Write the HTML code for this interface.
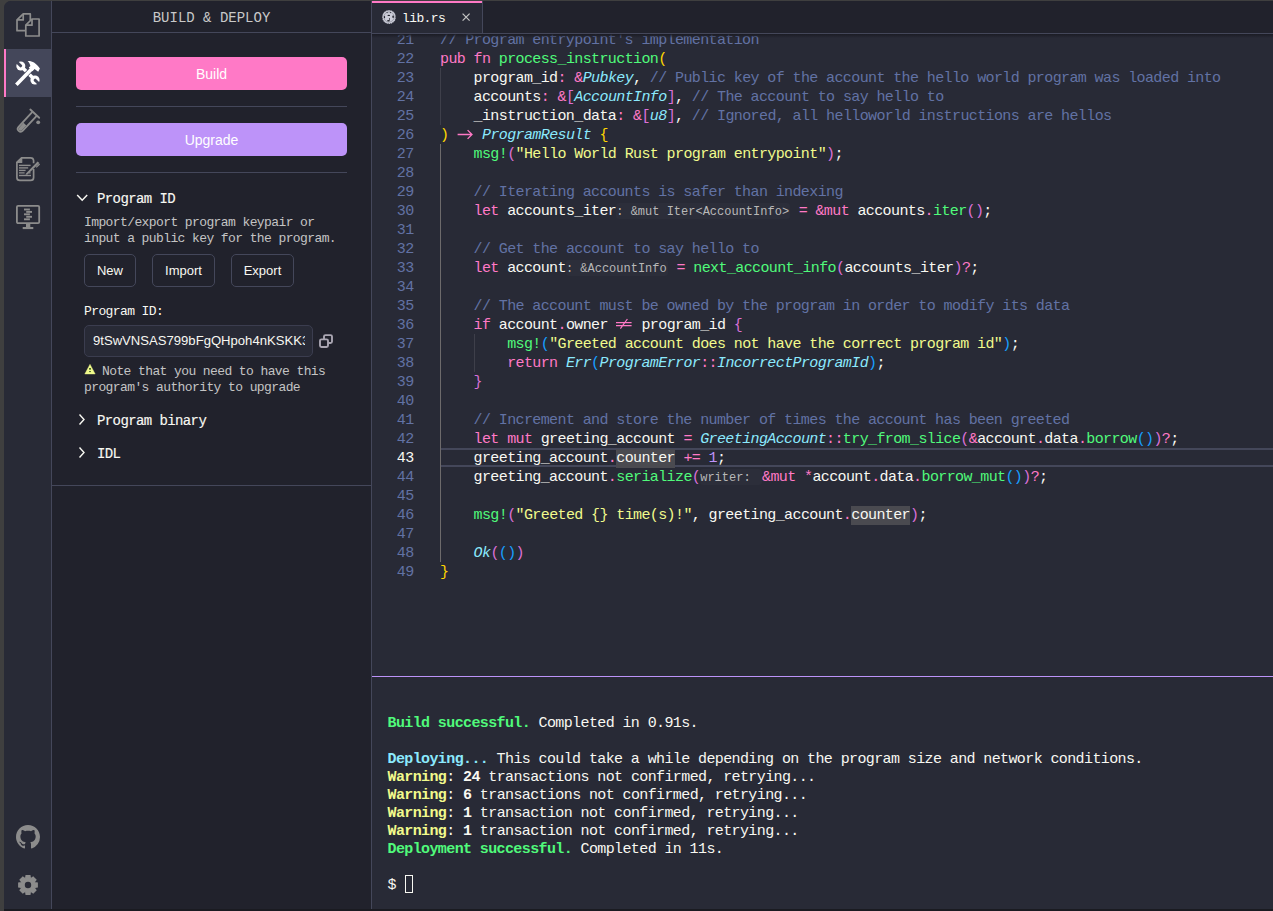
<!DOCTYPE html>
<html><head><meta charset="utf-8">
<style>
html,body{margin:0;padding:0;width:1273px;height:911px;overflow:hidden;background:#3f3f3f;}
*{box-sizing:border-box;}
.a{position:absolute;}
body{font-family:"Liberation Mono",monospace;color:#f8f8f2;}
.sans{font-family:"Liberation Sans",sans-serif;}
#frame{position:absolute;left:4px;top:1px;width:1269px;height:908px;overflow:hidden;border-top-left-radius:7px;background:#282a36;}
#bot{position:absolute;left:4px;top:909px;width:1269px;height:2px;background:#1a1b21;}
/* activity bar */
#act{left:4px;top:1px;width:47px;height:908px;background:#282a36;border-top-left-radius:7px;}
.vl{width:1px;background:#44475a;}
.hl{height:1px;background:#44475a;}
#side{left:52px;top:1px;width:319px;height:908px;background:#21222c;}
.icon{position:absolute;left:16px;width:24px;height:24px;}
/* sidebar */
.hdr{left:52px;top:3px;width:319px;height:31px;text-align:center;line-height:31px;font-size:14px;color:#c9c9c9;letter-spacing:0;}
.btn{left:76px;width:271px;height:33px;border-radius:5px;color:#fff;font-size:14px;text-align:center;line-height:35px;}
.sbtn{height:33px;border:1px solid #44475a;border-radius:5px;color:#f8f8f2;font-size:13px;text-align:center;line-height:32px;background:#21222c;}
.sec{font-size:14px;letter-spacing:-0.6px;color:#f8f8f2;line-height:16px;-webkit-text-stroke:0.15px #f8f8f2;}
.desc{font-size:13px;letter-spacing:-0.6px;color:#c4c4c4;line-height:16px;white-space:pre;}
/* editor */
#tabbar{left:372px;top:1px;width:901px;height:32px;background:#21222c;}
.ln{position:absolute;margin-top:1px;left:372px;width:41.6px;text-align:right;font-size:15px;letter-spacing:-0.6px;line-height:19px;height:19px;color:#6272a4;white-space:pre;}
.cl{position:absolute;margin-top:1px;left:440px;font-size:15px;letter-spacing:-0.61px;line-height:19px;height:19px;color:#f8f8f2;white-space:pre;}
.k{color:#ff79c6;}
.f{color:#50fa7b;}
.t{color:#8be9fd;font-style:italic;}
.c{color:#6272a4;}
.s{color:#f1fa8c;}
.n{color:#bd93f9;}
.b1{color:#ffd700;}
.b2{color:#da70d6;}
.b3{color:#179fff;}
.ih{font-size:12px;letter-spacing:0;color:#b8b8b8;background:#2c2e3a;border-radius:3px;}
.hi{background:#4a4a50;display:inline-block;vertical-align:top;height:19px;}
.hi2{margin-top:2px;height:15px;line-height:15px;}
.ih{display:inline-block;vertical-align:top;height:16px;line-height:19px;overflow:hidden;margin-top:1px;}
/* terminal */
.tl{position:absolute;margin-top:2px;left:387.5px;font-size:15px;letter-spacing:-0.61px;line-height:18px;height:18px;color:#f8f8f2;white-space:pre;}
.g{color:#50fa7b;font-weight:bold;}
.y{color:#f1fa8c;font-weight:bold;}
.bl{color:#8be9fd;font-weight:bold;}
.w{font-weight:bold;}
</style></head><body>
<div id="frame"></div>
<div id="bot"></div>
<div class="a" id="act"></div>
<div class="a vl" style="left:51px;top:1px;height:908px;"></div>
<div class="a" id="side"></div>
<div class="a vl" style="left:371px;top:1px;height:908px;"></div>

<!-- activity bar active -->
<div class="a" style="left:4px;top:49px;width:47px;height:48px;background:#44475a;"></div>
<div class="a" style="left:4px;top:49px;width:2px;height:48px;background:#ff79c6;"></div>

<!-- files icon -->
<svg class="a" style="left:12px;top:8px" width="32" height="32" viewBox="0 0 32 32">
<g fill="none" stroke="#8c8c8c" stroke-width="1.7" stroke-linejoin="round">
<path d="M18.3 12.4 V5.9 H11.2 L5 11.9 V22.7 H13.2"/>
<path d="M11.2 5.9 V11.9 H5"/>
<path d="M20 11 H27.1 V28 H13.8 V17.2 Z"/>
<path d="M20 11 V17.2 H13.8"/>
</g>
</svg>
<!-- tools icon (active) -->
<svg class="a" style="left:12px;top:57px" width="32" height="32" viewBox="0 0 32 32">
<defs><mask id="wm"><rect x="0" y="0" width="32" height="32" fill="#fff"/>
<path d="M8.6 8.8 L3 3.2" stroke="#000" stroke-width="3" stroke-linecap="round"/>
<path d="M23.2 23.2 L28.8 28.8" stroke="#000" stroke-width="3" stroke-linecap="round"/>
</mask></defs>
<g fill="#fff" mask="url(#wm)">
<circle cx="8.8" cy="9" r="4.5"/>
<circle cx="23" cy="23" r="4.6"/>
<path d="M8.8 9 L23 23" stroke="#fff" stroke-width="3.4"/>
</g>
<path d="M5.6 26.4 L18.8 12.8" stroke="#44475a" stroke-width="5"/>
<path d="M5.6 26.4 L19.8 11.8" stroke="#fff" stroke-width="3.6" stroke-linecap="square"/>
<path d="M15.6 4 C19.6 3.6 24.4 6 27.9 11.6 L26.2 14.8 L22.6 11.9 L20.4 14.2 L16.8 10.6 L18.4 9 C18 7.2 17 5.3 15.6 4 Z" fill="#fff"/>
</svg>
<!-- test tube -->
<svg class="a" style="left:12px;top:105px" width="32" height="32" viewBox="0 0 32 32">
<g transform="translate(14.8 17.2) rotate(43) scale(1.08)">
<path d="M-2.7 -10.5 V8.3 A2.7 2.7 0 0 0 2.7 8.3 V-10.5" fill="none" stroke="#8c8c8c" stroke-width="1.7"/>
<path d="M-5.6 -10.8 H5.6" fill="none" stroke="#8c8c8c" stroke-width="1.7" stroke-linecap="round"/>
<path d="M-1.8 2.5 H1.8 V8.3 A1.8 1.8 0 0 1 -1.8 8.3 Z" fill="#8c8c8c"/>
</g>
<circle cx="26.2" cy="17.3" r="1.9" fill="#8c8c8c"/>
</svg>
<!-- document with pen -->
<svg class="a" style="left:12px;top:153px" width="32" height="32" viewBox="0 0 32 32">
<g fill="none" stroke="#8c8c8c" stroke-width="1.7">
<path d="M21.6 10.2 V7.5 A3 3 0 0 0 18.6 4.8 H9.7 L4.9 9.4 V24.4 A3 3 0 0 0 7.9 27.4 H18.6 A3 3 0 0 0 21.6 24.4 V16"/>
</g>
<path d="M4.9 9.4 L9.7 4.8 V9.4 Z" fill="#8c8c8c" stroke="#8c8c8c" stroke-width="1.2" stroke-linejoin="round"/>
<g stroke="#8c8c8c" stroke-width="1.4">
<path d="M7 12.4 H18.6"/><path d="M7 14.9 H16.2"/><path d="M7 17.4 H13.6"/><path d="M7 19.9 H12.6 M16.9 19.9 H18.6"/><path d="M7 22.5 H19"/>
</g>
<path d="M14 20.4 L25.6 8.4 L27.4 10 L15.6 21.6 L13.6 21.8 Z" fill="#8c8c8c"/>
<path d="M24.2 14.4 L27.6 11" stroke="#8c8c8c" stroke-width="1.3"/>
</svg>
<!-- monitor -->
<svg class="a" style="left:12px;top:201px" width="32" height="32" viewBox="0 0 32 32">
<rect x="4.9" y="4.8" width="22.3" height="17.3" rx="1.2" fill="none" stroke="#8c8c8c" stroke-width="1.8"/>
<rect x="14" y="22.5" width="4.3" height="3.8" fill="#8c8c8c"/>
<rect x="10.7" y="26" width="10.6" height="2.1" fill="#8c8c8c"/>
<g stroke="#8c8c8c" stroke-width="1.9">
<path d="M12 8.5 H17.9"/><path d="M14.2 10.9 H20"/><path d="M12 13.3 H17.9"/><path d="M14.2 15.8 H20"/><path d="M12 18.3 H17.9"/>
</g>
</svg>
<!-- github -->
<svg class="a" style="left:16px;top:825px" width="24" height="24" viewBox="0 0 16 16">
<path fill="#8c8c8c" d="M8 0C3.58 0 0 3.58 0 8c0 3.54 2.29 6.53 5.47 7.59.4.07.55-.17.55-.38 0-.19-.01-.82-.01-1.49-2.01.37-2.53-.49-2.69-.94-.09-.23-.48-.94-.82-1.130-.28-.15-.68-.52-.01-.53.63-.01 1.08.58 1.23.82.72 1.21 1.870.87 2.33.66.07-.52.28-.87.51-1.07-1.78-.2-3.64-.89-3.64-3.95 0-.87.31-1.59.82-2.15-.08-.2-.36-1.02.08-2.12 0 0 .67-.21 2.2.82.64-.18 1.32-.27 2-.27.68 0 1.36.09 2 .27 1.53-1.04 2.2-.82 2.2-.82.44 1.1.16 1.92.08 2.12.51.56.82 1.27.82 2.15 0 3.07-1.87 3.75-3.65 3.95.29.25.54.73.54 1.48 0 1.07-.01 1.93-.01 2.2 0 .21.15.46.55.38A8.013 8.013 0 0016 8c0-4.420-3.58-8-8-8z"/>
</svg>
<!-- gear -->
<svg class="a" style="left:0;top:0" width="52" height="911" viewBox="0 0 52 911">
<path fill="#8c8c8c" fill-rule="evenodd" d="M24.99 878.24 L25.52 875.10 L30.48 875.10 L31.01 878.24 L30.65 878.09 L33.25 876.25 L36.75 879.75 L34.91 882.35 L34.76 881.99 L37.90 882.52 L37.90 887.48 L34.76 888.01 L34.91 887.65 L36.75 890.25 L33.25 893.75 L30.65 891.91 L31.01 891.76 L30.48 894.90 L25.52 894.90 L24.99 891.76 L25.35 891.91 L22.75 893.75 L19.25 890.25 L21.09 887.65 L21.24 888.01 L18.10 887.48 L18.10 882.52 L21.24 881.99 L21.09 882.35 L19.25 879.75 L22.75 876.25 L25.35 878.09Z M28 881.8 A3.2 3.2 0 1 0 28 888.2 A3.2 3.2 0 1 0 28 881.8Z"/>
</svg>

<!-- sidebar header -->
<div class="a hdr">BUILD &amp; DEPLOY</div>
<div class="a hl" style="left:52px;top:32px;width:319px;"></div>

<div class="a btn sans" style="top:57px;background:#ff79c6;">Build</div>
<div class="a hl" style="left:76px;top:106px;width:271px;"></div>
<div class="a btn sans" style="top:123px;background:#bd93f9;">Upgrade</div>
<div class="a hl" style="left:76px;top:172px;width:271px;"></div>

<!-- Program ID section -->
<svg class="a" style="left:76px;top:193px" width="12" height="10" viewBox="0 0 12 10"><path d="M1.2 2 L6.2 7.2 L11.2 2" fill="none" stroke="#f8f8f2" stroke-width="1.5"/></svg>
<div class="a sec" style="left:97px;top:191px;">Program ID</div>
<div class="a desc" style="left:84px;top:215px;">Import/export program keypair or
input a public key for the program.</div>
<div class="a sbtn sans" style="left:84px;top:254px;width:52px;">New</div>
<div class="a sbtn sans" style="left:152px;top:254px;width:63px;">Import</div>
<div class="a sbtn sans" style="left:231px;top:254px;width:63px;">Export</div>
<div class="a desc" style="left:84px;top:304px;color:#f8f8f2">Program ID:</div>
<div class="a" style="left:84px;top:325px;width:229px;height:32px;border:1px solid #3b3d4f;border-radius:5px;background:#282a36;overflow:hidden;">
<div class="a sans" style="left:8px;top:0;width:212px;overflow:hidden;white-space:nowrap;font-size:13.1px;line-height:30px;color:#f8f8f2;">9tSwVNSAS799bFgQHpoh4nKSKK3Yk9bTvQ5yGfJkZrFa</div>
</div>
<!-- copy icon -->
<svg class="a" style="left:318px;top:333px" width="16" height="16" viewBox="0 0 16 16"><rect x="2" y="6.4" width="8" height="7.6" rx="1.4" fill="none" stroke="#aaa6b2" stroke-width="1.9"/><path d="M6 6.4 V3.6 Q6 2.1 7.5 2.1 H12.5 Q14 2.1 14 3.6 V8.5 Q14 10 12.5 10 H10" fill="none" stroke="#aaa6b2" stroke-width="1.9"/></svg>
<!-- warning -->
<svg class="a" style="left:84px;top:364px" width="12" height="11" viewBox="0 0 12 11"><path d="M6 0.3 L11.2 10 H0.8 Z" fill="#f1fa8c" stroke="#f1fa8c" stroke-width="0.4" stroke-linejoin="round"/><rect x="5" y="4" width="2" height="1.7" fill="#4a6a2a"/><rect x="5" y="7.1" width="2" height="1" fill="#4a6a2a"/></svg>
<div class="a desc" style="left:102px;top:364px;">Note that you need to have this</div>
<div class="a desc" style="left:84px;top:380px;">program's authority to upgrade</div>
<svg class="a" style="left:76px;top:413px" width="12" height="13" viewBox="0 0 12 13"><path d="M3.5 1.5 L8 6.5 L3.5 11.5" fill="none" stroke="#f8f8f2" stroke-width="1.4"/></svg>
<div class="a sec" style="left:97px;top:413px;">Program binary</div>
<svg class="a" style="left:76px;top:446px" width="12" height="13" viewBox="0 0 12 13"><path d="M3.5 1.5 L8 6.5 L3.5 11.5" fill="none" stroke="#f8f8f2" stroke-width="1.4"/></svg>
<div class="a sec" style="left:97px;top:446px;">IDL</div>
<div class="a hl" style="left:52px;top:485px;width:319px;"></div>

<!-- line numbers -->
<div class="ln" style="top:30px">21</div>
<div class="ln" style="top:49px">22</div>
<div class="ln" style="top:68px">23</div>
<div class="ln" style="top:87px">24</div>
<div class="ln" style="top:106px">25</div>
<div class="ln" style="top:125px">26</div>
<div class="ln" style="top:144px">27</div>
<div class="ln" style="top:163px">28</div>
<div class="ln" style="top:182px">29</div>
<div class="ln" style="top:201px">30</div>
<div class="ln" style="top:220px">31</div>
<div class="ln" style="top:239px">32</div>
<div class="ln" style="top:258px">33</div>
<div class="ln" style="top:277px">34</div>
<div class="ln" style="top:296px">35</div>
<div class="ln" style="top:315px">36</div>
<div class="ln" style="top:334px">37</div>
<div class="ln" style="top:353px">38</div>
<div class="ln" style="top:372px">39</div>
<div class="ln" style="top:391px">40</div>
<div class="ln" style="top:410px">41</div>
<div class="ln" style="top:429px">42</div>
<div class="ln" style="top:448px;color:#f8f8f2">43</div>
<div class="ln" style="top:467px">44</div>
<div class="ln" style="top:486px">45</div>
<div class="ln" style="top:505px">46</div>
<div class="ln" style="top:524px">47</div>
<div class="ln" style="top:543px">48</div>
<div class="ln" style="top:562px">49</div>
<!-- indent guides -->
<div class="a" style="left:440px;top:68px;width:1px;height:57px;background:#3e3f4a"></div>
<div class="a" style="left:440px;top:144px;width:1px;height:418px;background:#6d6a6b"></div>
<div class="a" style="left:474px;top:334px;width:1px;height:38px;background:#3e3f4a"></div>
<!-- current line -->
<div class="a" style="left:441px;top:448px;width:832px;height:19px;border-top:2px solid #44475a;border-bottom:2px solid #44475a;"></div>
<!-- code -->
<div class="cl" style="top:30px"><span class="c">// Program entrypoint's implementation</span></div>
<div class="cl" style="top:49px"><span class="k">pub fn</span> <span class="f">process_instruction</span><span class="b1">(</span></div>
<div class="cl" style="top:68px">    program_id<span class="k">:</span> <span class="k">&amp;</span><span class="t">Pubkey</span>, <span class="c">// Public key of the account the hello world program was loaded into</span></div>
<div class="cl" style="top:87px">    accounts<span class="k">:</span> <span class="k">&amp;</span><span class="b2">[</span><span class="t">AccountInfo</span><span class="b2">]</span>, <span class="c">// The account to say hello to</span></div>
<div class="cl" style="top:106px">    _instruction_data<span class="k">:</span> <span class="k">&amp;</span><span class="b2">[</span><span class="t">u8</span><span class="b2">]</span>, <span class="c">// Ignored, all helloworld instructions are hellos</span></div>
<div class="cl" style="top:125px"><span class="b1">)</span> <svg width="16.8" height="19" viewBox="0 0 16.8 19" style="vertical-align:top"><path d="M0.6 8.5 H15 M10.6 4.1 L15 8.5 L10.6 12.9" fill="none" stroke="#ff79c6" stroke-width="1.3"/></svg> <span class="t">ProgramResult</span> <span class="b1">{</span></div>
<div class="cl" style="top:144px">    <span class="f">msg!</span><span class="b2">(</span><span class="s">"Hello World Rust program entrypoint"</span><span class="b2">)</span>;</div>
<div class="cl" style="top:182px">    <span class="c">// Iterating accounts is safer than indexing</span></div>
<div class="cl" style="top:201px">    <span class="k">let</span> accounts_iter<span class="ih" style="width:174px">: &amp;mut Iter&lt;AccountInfo&gt;</span> <span class="k">=</span> <span class="k">&amp;mut</span> accounts<span class="k">.</span><span class="f">iter</span><span class="b2">()</span>;</div>
<div class="cl" style="top:239px">    <span class="c">// Get the account to say hello to</span></div>
<div class="cl" style="top:258px">    <span class="k">let</span> account<span class="ih" style="width:102.2px">: &amp;AccountInfo</span> <span class="k">=</span> <span class="f">next_account_info</span><span class="b2">(</span>accounts_iter<span class="b2">)</span><span class="k">?</span>;</div>
<div class="cl" style="top:296px">    <span class="c">// The account must be owned by the program in order to modify its data</span></div>
<div class="cl" style="top:315px">    <span class="k">if</span> account<span class="k">.</span>owner <svg width="16.8" height="19" viewBox="0 0 16.8 19" style="vertical-align:top"><path d="M0 6.6 H15.6 M0 9.7 H15.6 M11.4 3 L4.4 12.6" fill="none" stroke="#ff79c6" stroke-width="1.2"/></svg> program_id <span class="b2">{</span></div>
<div class="cl" style="top:334px">        <span class="f">msg!</span><span class="b3">(</span><span class="s">"Greeted account does not have the correct program id"</span><span class="b3">)</span>;</div>
<div class="cl" style="top:353px">        <span class="k">return</span> <span class="t">Err</span><span class="b3">(</span><span class="t">ProgramError</span><span class="k">::</span><span class="t">IncorrectProgramId</span><span class="b3">)</span>;</div>
<div class="cl" style="top:372px">    <span class="b2">}</span></div>
<div class="cl" style="top:410px">    <span class="c">// Increment and store the number of times the account has been greeted</span></div>
<div class="cl" style="top:429px">    <span class="k">let mut</span> greeting_account <span class="k">=</span> <span class="t">GreetingAccount</span><span class="k">::</span><span class="f">try_from_slice</span><span class="b2">(</span><span class="k">&amp;</span>account<span class="k">.</span>data<span class="k">.</span><span class="f">borrow</span><span class="b3">()</span><span class="b2">)</span><span class="k">?</span>;</div>
<div class="cl" style="top:448px">    greeting_account<span class="k">.</span><span class="hi">counter</span> <span class="k">+=</span> <span class="n">1</span>;</div>
<div class="cl" style="top:467px">    greeting_account<span class="k">.</span><span class="f">serialize</span><span class="b2">(</span><span class="ih" style="width:61.8px">writer: </span><span class="k">&amp;mut</span> <span class="k">*</span>account<span class="k">.</span>data<span class="k">.</span><span class="f">borrow_mut</span><span class="b3">()</span><span class="b2">)</span><span class="k">?</span>;</div>
<div class="cl" style="top:505px">    <span class="f">msg!</span><span class="b2">(</span><span class="s">"Greeted {} time(s)!"</span>, greeting_account<span class="k">.</span><span class="hi">counter</span><span class="b2">)</span>;</div>
<div class="cl" style="top:543px">    <span class="t">Ok</span><span class="b2">(</span><span class="b3">()</span><span class="b2">)</span></div>
<div class="cl" style="top:562px"><span class="b1">}</span></div>

<!-- tab bar -->
<div class="a" id="tabbar"></div>
<div class="a hl" style="left:372px;top:33px;width:901px;"></div>
<!-- tab -->
<div class="a" style="left:372px;top:1px;width:111px;height:32px;background:#282a36;border-right:1px solid #44475a;"></div>
<div class="a" style="left:372px;top:1px;width:110px;height:2px;background:#ff79c6;"></div>
<svg class="a" style="left:379px;top:7px" width="20" height="20" viewBox="0 0 20 20">
<circle cx="10" cy="10" r="6.9" fill="#cbccd8"/>
<circle cx="10" cy="10" r="6.9" fill="none" stroke="#282a36" stroke-width="0.9" stroke-dasharray="0.9 1.3"/>
<circle cx="10" cy="10" r="5.1" fill="none" stroke="#8a8b96" stroke-width="0.7"/>
<g fill="#23242e">
<ellipse cx="9.8" cy="8.4" rx="1.3" ry="0.65"/>
<ellipse cx="5.5" cy="10.1" rx="0.65" ry="1.2"/>
<ellipse cx="14.1" cy="9.7" rx="0.8" ry="1.2"/>
<ellipse cx="9.5" cy="13.7" rx="1.4" ry="0.8"/>
<circle cx="8.1" cy="5.6" r="0.55"/>
<circle cx="11.4" cy="5.6" r="0.55"/>
<rect x="10.1" y="11" width="0.7" height="2.2"/>
</g>
</svg>
<div class="a" style="left:402px;top:11px;font-size:13px;letter-spacing:-0.6px;line-height:16px;color:#f8f8f2;">lib.rs</div>
<svg class="a" style="left:461px;top:12px" width="10" height="10" viewBox="0 0 10 10"><path d="M1.6 1.6 L8.6 8.6 M8.6 1.6 L1.6 8.6" stroke="#c4c4c4" stroke-width="1.2"/></svg>
<!-- editor scroll shadow -->
<div class="a" style="left:372px;top:34px;width:901px;height:4px;background:linear-gradient(#1b1c24,rgba(40,42,54,0));"></div>


<!-- terminal -->
<div class="a" style="left:372px;top:676px;width:901px;height:1px;background:#bd93f9;"></div>

<div class="a" style="left:372px;top:677px;width:901px;height:232px;background:#282a36;"></div>
<div class="tl" style="top:713px"><span class="g">Build successful.</span> Completed in 0.91s.</div>
<div class="tl" style="top:749px"><span class="bl">Deploying...</span> This could take a while depending on the program size and network conditions.</div>
<div class="tl" style="top:767px"><span class="y">Warning</span>: <span class="w">24</span> transactions not confirmed, retrying...</div>
<div class="tl" style="top:785px"><span class="y">Warning</span>: <span class="w">6</span> transactions not confirmed, retrying...</div>
<div class="tl" style="top:803px"><span class="y">Warning</span>: <span class="w">1</span> transaction not confirmed, retrying...</div>
<div class="tl" style="top:821px"><span class="y">Warning</span>: <span class="w">1</span> transaction not confirmed, retrying...</div>
<div class="tl" style="top:839px"><span class="g">Deployment successful.</span> Completed in 11s.</div>
<div class="tl" style="top:875px">$ </div>
<div class="a" style="left:405px;top:875px;width:8px;height:18px;border:1px solid #f8f8f2;"></div>

</body></html>
